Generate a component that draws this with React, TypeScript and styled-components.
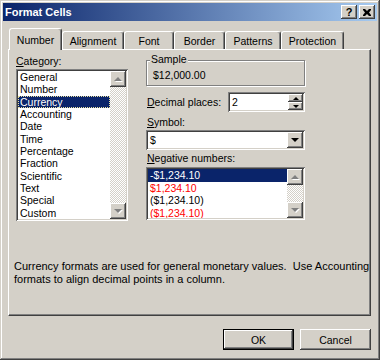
import React, {FC} from 'react';
import styled, {createGlobalStyle, css} from 'styled-components';

const Global=createGlobalStyle`
body{
margin:0;
font-family:"Liberation Sans", Arial, sans-serif;
font-size:10.5px;
color:#000;
}
`;

const raised=css`
background:#d4d0c8;
box-shadow:inset -1px -1px #404040, inset 1px 1px #fff, inset -2px -2px #808080, inset 2px 2px #d4d0c8;
`;

const sunken=css`
box-shadow:inset 1px 1px #808080, inset -1px -1px #fff, inset 2px 2px #404040, inset -2px -2px #d4d0c8;
`;

const Window=styled.div`
width:380px;
height:360px;
box-sizing:border-box;
padding:3px;
background:#d4d0c8;
box-shadow:inset -1px -1px #404040, inset 1px 1px #d4d0c8, inset -2px -2px #808080, inset 2px 2px #fff;
display:flex;
flex-direction:column;
`;

const TitleBar=styled.div`
height:18px;
display:flex;
align-items:center;
padding:0 2px;
background:linear-gradient(to right, #0a246a, #a6caf0);
color:#fff;
font-weight:bold;
font-size:11px;
`;

const TitleText=styled.span`
flex:1;
`;

const CaptionButton=styled.div`
${raised};
width:16px;
height:14px;
box-sizing:border-box;
display:flex;
align-items:center;
justify-content:center;
color:#000;
font-size:11px;
font-weight:bold;
margin-left:2px;
`;

const Body=styled.div`
flex:1;
display:flex;
flex-direction:column;
padding:7px 6px 0 5px;
`;

const TabRow=styled.div`
display:flex;
align-items:flex-end;
height:21px;
padding-left:1px;
position:relative;
z-index:1;
`;

const Tab=styled.div<{$w:number;$active?:boolean}>`
width:${p=>p.$w}px;
height:${p=>p.$active?22:18}px;
margin-bottom:${p=>p.$active?-1:0}px;
box-sizing:border-box;
display:flex;
justify-content:center;
padding-top:${p=>p.$active?5:3}px;
line-height:13px;
background:#d4d0c8;
border-top:1px solid #fff;
border-left:1px solid #fff;
border-right:1px solid #404040;
box-shadow:inset -1px 0 #808080;
border-radius:3px 3px 0 0;
`;

const Panel=styled.div`
height:267px;
box-sizing:border-box;
border-top:1px solid #fff;
border-left:1px solid #fff;
border-right:1px solid #404040;
border-bottom:1px solid #404040;
box-shadow:inset -1px -1px #808080;
padding:5px 0 0 7px;
display:flex;
flex-direction:column;
`;

const Columns=styled.div`
display:grid;
grid-template-columns:112px 159px;
column-gap:18px;
`;

const Column=styled.div`
display:flex;
flex-direction:column;
`;

const Label=styled.div<{$mt?:number;$ml?:number}>`
line-height:13px;
height:13px;
margin-top:${p=>p.$mt||0}px;
margin-left:${p=>p.$ml||0}px;
white-space:nowrap;
`;

const ListBox=styled.div<{$h:number;$mt?:number}>`
${sunken};
height:${p=>p.$h}px;
margin-top:${p=>p.$mt||0}px;
box-sizing:border-box;
padding:2px;
background:#fff;
display:flex;
`;

const Items=styled.div`
flex:1;
display:flex;
flex-direction:column;
overflow:hidden;
`;

const Item=styled.div<{$sel?:boolean;$red?:boolean;$h:number;$focus?:boolean}>`
height:${p=>p.$h}px;
line-height:${p=>p.$h}px;
flex-shrink:0;
padding-left:2px;
white-space:nowrap;
color:${p=>p.$sel?'#fff':p.$red?'#ff0000':'#000'};
background:${p=>p.$sel?'#0a246a':'transparent'};
${p=>p.$focus&&css`outline:1px dotted #e8e0a0;outline-offset:-1px;`}
`;

const ScrollBar=styled.div`
width:16px;
display:flex;
flex-direction:column;
justify-content:space-between;
background:repeating-conic-gradient(#fff 0 25%, #d4d0c8 0 50%) 0 0/2px 2px;
`;

const ArrowButton=styled.div<{$w?:number;$h?:number}>`
${raised};
width:${p=>p.$w||16}px;
height:${p=>p.$h||16}px;
box-sizing:border-box;
display:flex;
align-items:center;
justify-content:center;
flex-shrink:0;
`;

const Arrow=styled.span<{$up?:boolean;$size:number;$dim?:boolean}>`
width:0;
height:0;
border-left:${p=>p.$size}px solid transparent;
border-right:${p=>p.$size}px solid transparent;
${p=>p.$up
    ?css`border-bottom:${p.$size}px solid ${p.$dim?'#808080':'#000'};`
    :css`border-top:${p.$size}px solid ${p.$dim?'#808080':'#000'};`}
${p=>p.$dim&&css`filter:drop-shadow(1px 1px 0 #fff);`}
`;

const GroupBox=styled.div`
position:relative;
margin-top:5px;
height:26px;
box-sizing:border-box;
border:1px solid #808080;
box-shadow:inset 1px 1px #fff, 1px 1px #fff;
padding:8px 0 0 6px;
line-height:13px;
`;

const Legend=styled.span`
position:absolute;
top:-8px;
left:3px;
padding:0 1px;
background:#d4d0c8;
line-height:13px;
`;

const Row=styled.div<{$mt?:number}>`
display:flex;
align-items:center;
margin-top:${p=>p.$mt||0}px;
`;

const Field=styled.div<{$w:number}>`
${sunken};
width:${p=>p.$w}px;
height:20px;
box-sizing:border-box;
padding:2px;
background:#fff;
display:flex;
align-items:center;
`;

const FieldText=styled.span`
flex:1;
padding-left:2px;
line-height:13px;
`;

const Spinner=styled.div`
display:flex;
flex-direction:column;
`;

const Description=styled.div`
margin:39px 0 0 -2px;
font-size:11px;
line-height:12.7px;
white-space:nowrap;
`;

const ButtonRow=styled.div`
display:flex;
justify-content:flex-end;
gap:6px;
margin-top:13px;
`;

const Button=styled.div<{$default?:boolean}>`
width:71px;
height:21px;
box-sizing:border-box;
display:flex;
align-items:center;
justify-content:center;
background:#d4d0c8;
${p=>p.$default
    ?css`border:1px solid #000;box-shadow:inset -1px -1px #404040, inset 1px 1px #fff, inset -2px -2px #808080;`
    :css`box-shadow:inset -1px -1px #404040, inset 1px 1px #fff, inset -2px -2px #808080, inset 2px 2px #d4d0c8;`}
`;

const categories=['General','Number','Currency','Accounting','Date','Time','Percentage','Fraction','Scientific','Text','Special','Custom'];

const negatives=[
    {text:'-$1,234.10',red:false},
    {text:'$1,234.10',red:true},
    {text:'($1,234.10)',red:false},
    {text:'($1,234.10)',red:true},
];

const tabs=[
    {name:'Number',w:53},
    {name:'Alignment',w:62},
    {name:'Font',w:50},
    {name:'Border',w:51},
    {name:'Patterns',w:56},
    {name:'Protection',w:63},
];

const VScroll:FC=()=>(
    <ScrollBar>
        <ArrowButton><Arrow $up $size={4} $dim /></ArrowButton>
        <ArrowButton><Arrow $size={4} $dim /></ArrowButton>
    </ScrollBar>
);

const App:FC=()=>{
    return(
        <Window>
            <Global />
            <TitleBar>
                <TitleText>Format Cells</TitleText>
                <CaptionButton>?</CaptionButton>
                <CaptionButton>
                    <svg width="8" height="7" viewBox="0 0 8 7">
                        <path d="M0 0h2l2 2 2-2h2v1L6 3.5 8 6v1H6L4 5 2 7H0V6l2-2.5L0 1z" fill="#000" />
                    </svg>
                </CaptionButton>
            </TitleBar>
            <Body>
                <TabRow>
                    {tabs.map((t,i)=>(
                        <Tab key={t.name} $w={t.w} $active={i===0}>{t.name}</Tab>
                    ))}
                </TabRow>
                <Panel>
                    <Columns>
                        <Column>
                            <Label><u>C</u>ategory:</Label>
                            <ListBox $h={152} $mt={1}>
                                <Items>
                                    {categories.map(c=>(
                                        <Item key={c} $h={12.35} $sel={c==='Currency'} $focus={c==='Currency'}>{c}</Item>
                                    ))}
                                </Items>
                                <VScroll />
                            </ListBox>
                        </Column>
                        <Column>
                            <GroupBox>
                                <Legend>Sample</Legend>
                                $12,000.00
                            </GroupBox>
                            <Row $mt={6}>
                                <Label $ml={1}><u>D</u>ecimal places:</Label>
                                <Field $w={77} style={{marginLeft:'auto'}}>
                                    <FieldText>2</FieldText>
                                    <Spinner>
                                        <ArrowButton $w={15} $h={8}><Arrow $up $size={3} /></ArrowButton>
                                        <ArrowButton $w={15} $h={8}><Arrow $size={3} /></ArrowButton>
                                    </Spinner>
                                </Field>
                            </Row>
                            <Label $mt={4} $ml={1}><u>S</u>ymbol:</Label>
                            <Field $w={159} style={{marginTop:1}}>
                                <FieldText>$</FieldText>
                                <ArrowButton><Arrow $size={4} /></ArrowButton>
                            </Field>
                            <Label $mt={2} $ml={1}><u>N</u>egative numbers:</Label>
                            <ListBox $h={53} $mt={2}>
                                <Items>
                                    {negatives.map((n,i)=>(
                                        <Item key={i} $h={12.5} $sel={i===0} $red={n.red}>{n.text}</Item>
                                    ))}
                                </Items>
                                <VScroll />
                            </ListBox>
                        </Column>
                    </Columns>
                    <Description>
                        Currency formats are used for general monetary values.&nbsp; Use Accounting<br />
                        formats to align decimal points in a column.
                    </Description>
                </Panel>
                <ButtonRow>
                    <Button $default>OK</Button>
                    <Button>Cancel</Button>
                </ButtonRow>
            </Body>
        </Window>
    );
}

export default App;
